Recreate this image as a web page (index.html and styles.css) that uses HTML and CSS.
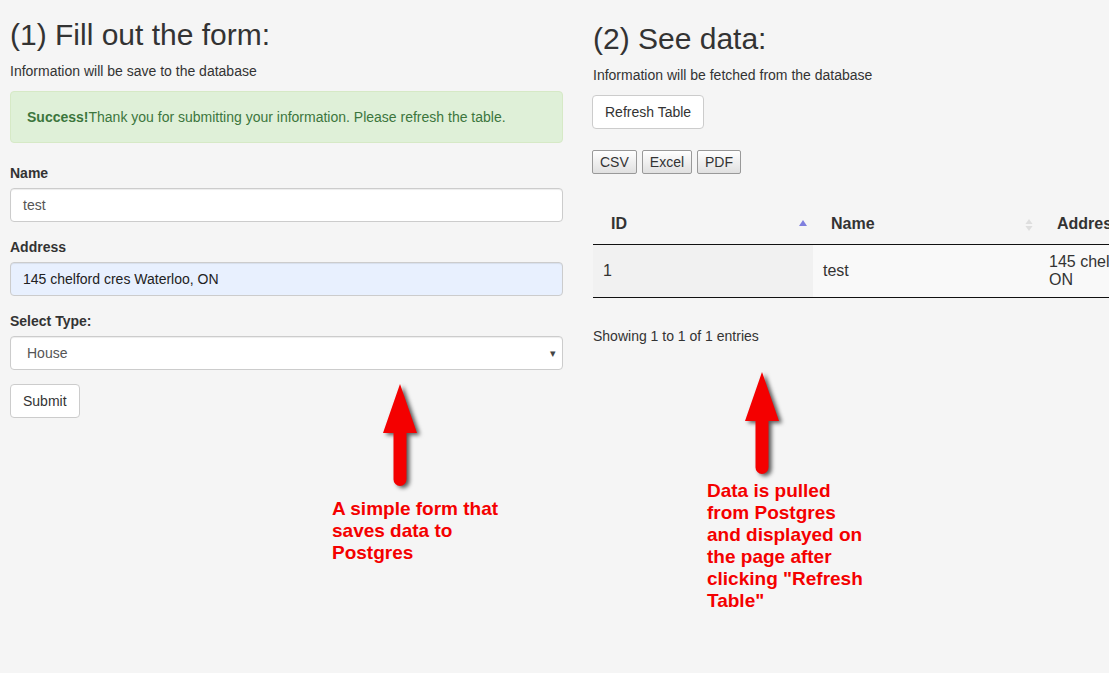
FILE: index.html
```html
<!DOCTYPE html>
<html>
<head>
<meta charset="utf-8">
<title>Form and data</title>
<link rel="stylesheet" href="styles.css">
</head>
<body>
<div class="page">
  <div class="col col-left">
    <h2 class="title">(1) Fill out the form:</h2>
    <p class="desc">Information will be save to the database</p>
    <div class="alert"><strong>Success!</strong>Thank you for submitting your information. Please refresh the table.</div>
    <div class="form-group">
      <label class="label">Name</label>
      <div class="input">test</div>
    </div>
    <div class="form-group">
      <label class="label">Address</label>
      <div class="input input-autofill">145 chelford cres Waterloo, ON</div>
    </div>
    <div class="form-group">
      <label class="label">Select Type:</label>
      <div class="input select"><span class="select-text">House</span><span class="caret">&#9662;</span></div>
    </div>
    <button class="btn">Submit</button>
  </div>
  <div class="col col-right">
    <h2 class="title">(2) See data:</h2>
    <p class="desc">Information will be fetched from the database</p>
    <button class="btn">Refresh Table</button>
    <div class="dt-buttons">
      <button class="dt-btn">CSV</button>
      <button class="dt-btn">Excel</button>
      <button class="dt-btn">PDF</button>
    </div>
    <table class="dt">
      <thead>
        <tr>
          <th class="c1">ID<svg class="sort" width="8" height="14" viewBox="0 0 8 14"><path d="M4 2 L8 8 L0 8 Z" fill="#7f7fde"/></svg></th>
          <th class="c2">Name<svg class="sort" width="8" height="14" viewBox="0 0 8 14"><path d="M4 1 L7.5 6 L0.5 6 Z" fill="#dedede"/><path d="M4 13 L7.5 8 L0.5 8 Z" fill="#dedede"/></svg></th>
          <th class="c3">Address<svg class="sort" width="8" height="14" viewBox="0 0 8 14"><path d="M4 1 L7.5 6 L0.5 6 Z" fill="#dedede"/><path d="M4 13 L7.5 8 L0.5 8 Z" fill="#dedede"/></svg></th>
          <th class="c4">Type<svg class="sort" width="8" height="14" viewBox="0 0 8 14"><path d="M4 1 L7.5 6 L0.5 6 Z" fill="#dedede"/><path d="M4 13 L7.5 8 L0.5 8 Z" fill="#dedede"/></svg></th>
        </tr>
      </thead>
      <tbody>
        <tr>
          <td class="sorted">1</td>
          <td>test</td>
          <td>145 chelford cres Waterloo, ON</td>
          <td>House</td>
        </tr>
      </tbody>
    </table>
    <div class="info">Showing 1 to 1 of 1 entries</div>
  </div>
</div>

<svg class="arrow arrow-1" width="40" height="108" viewBox="0 0 40 108"><path d="M17 0 L34 49 L23.5 49 L23.5 95.5 A6.5 6.5 0 0 1 10.5 95.5 L10.5 49 L0 49 Z" fill="#f40000"/></svg>
<div class="note note-1">A simple form that<br>saves data to<br>Postgres</div>

<svg class="arrow arrow-2" width="40" height="108" viewBox="0 0 40 108"><path d="M17 0 L34 49 L23.5 49 L23.5 95.5 A6.5 6.5 0 0 1 10.5 95.5 L10.5 49 L0 49 Z" fill="#f40000"/></svg>
<div class="note note-2">Data is pulled<br>from Postgres<br>and displayed on<br>the page after<br>clicking "Refresh<br>Table"</div>
</body>
</html>
```

FILE: styles.css
```css
html, body {
  margin: 0;
  padding: 0;
}
body {
  background: #f5f5f5;
  font-family: "Liberation Sans", Arial, sans-serif;
  font-size: 14px;
  line-height: 20px;
  color: #333;
  width: 1109px;
  height: 673px;
  overflow: hidden;
  position: relative;
}
.page {
  display: flex;
  gap: 30px;
  padding-left: 10px;
}
.col-left {
  width: 553px;
  flex: none;
}
.col-right {
  flex: none;
  width: 900px;
  padding-top: 4px;
}
.title {
  font-size: 30px;
  font-weight: 500;
  line-height: 33px;
  margin: 18px 0 10px;
  color: #333;
}
.desc {
  margin: 0 0 10px;
}
.alert {
  margin-top: 1px;
  background: #dff0d8;
  border: 1px solid #d6e9c6;
  color: #3c763d;
  border-radius: 4px;
  padding: 15px 16px;
  margin-bottom: 20px;
}
.alert strong {
  font-weight: bold;
}
.form-group {
  margin-bottom: 15px;
}
.label {
  display: block;
  font-weight: bold;
  margin-bottom: 5px;
}
.input {
  box-sizing: border-box;
  height: 34px;
  padding: 6px 12px;
  background: #fff;
  border: 1px solid #ccc;
  border-radius: 4px;
  color: #555;
  box-shadow: inset 0 1px 1px rgba(0,0,0,.075);
}
.input-autofill {
  background: #e8f0fe;
  color: #222;
}
.select {
  display: flex;
  justify-content: space-between;
  align-items: center;
  padding-left: 16px;
  padding-right: 6px;
}
.caret {
  font-size: 11px;
  color: #444;
}
.btn {
  display: inline-block;
  box-sizing: border-box;
  height: 34px;
  padding: 6px 12px;
  font-family: inherit;
  font-size: 14px;
  line-height: 20px;
  color: #333;
  background: #fff;
  border: 1px solid #ccc;
  border-radius: 4px;
  margin: 0;
}
.col-left .btn {
  margin-top: -1px;
}
.col-right .btn {
  margin-left: -1px;
}
.dt-buttons {
  display: flex;
  gap: 5px;
  margin: 21px 0 0 -1px;
}
.dt-btn {
  box-sizing: border-box;
  height: 24px;
  padding: 3px 7px;
  font-family: inherit;
  font-size: 14px;
  line-height: 16px;
  color: #333;
  border: 1px solid #999;
  border-radius: 2px;
  background: linear-gradient(#ffffff, #e0e0e0);
  margin: 0;
}
.dt {
  border-collapse: collapse;
  margin-top: 30px;
  table-layout: fixed;
  width: 900px;
  font-size: 16px;
}
.dt th {
  position: relative;
  text-align: left;
  font-weight: bold;
  padding: 10px 18px;
  line-height: 20px;
  border-bottom: 1px solid #111;
}
.dt .c1 { width: 184px; }
.dt .c2 { width: 190px; }
.dt .c3 { width: 194px; }
.sort {
  position: absolute;
  right: 6px;
  top: 14px;
}
.dt td {
  background: #f9f9f9;
  padding: 8px 10px;
  line-height: 18px;
  vertical-align: middle;
  border-bottom: 1px solid #111;
}
.dt td.sorted {
  background: #f1f1f1;
}
.info {
  margin-top: 28px;
}
.arrow {
  position: absolute;
  filter: drop-shadow(3px 2px 2px rgba(0,0,0,.65));
}
.arrow-1 {
  left: 383px;
  top: 384px;
}
.arrow-2 {
  left: 745px;
  top: 372px;
}
.note {
  position: absolute;
  color: #f40000;
  font-weight: bold;
  font-size: 19px;
  line-height: 22px;
}
.note-1 {
  left: 332px;
  top: 498px;
}
.note-2 {
  left: 707px;
  top: 480px;
}
```
